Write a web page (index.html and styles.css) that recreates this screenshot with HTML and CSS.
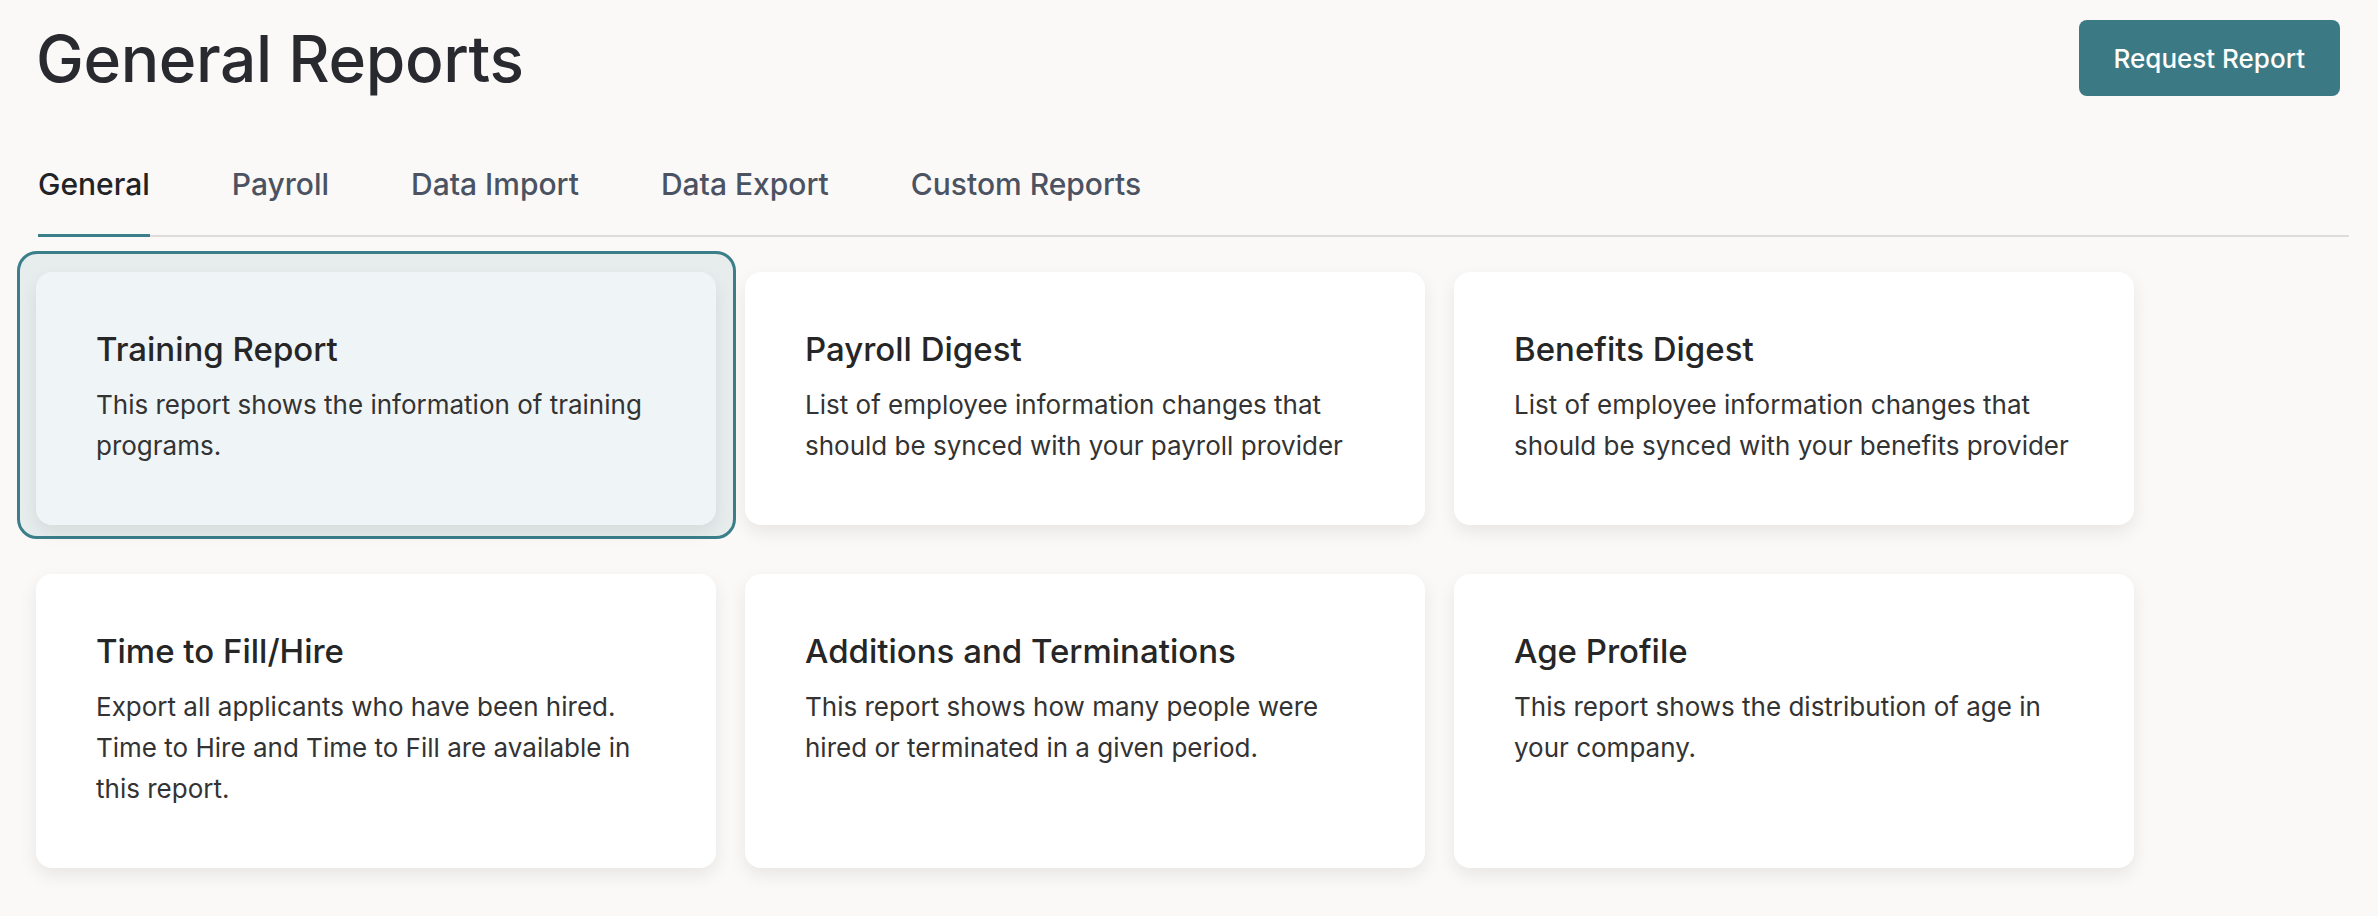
FILE: index.html
```html
<!DOCTYPE html>
<html lang="en">
<head>
    <meta charset="UTF-8">
    <meta name="viewport" content="width=device-width, initial-scale=1.0">
    <title>General Reports</title>
    <link rel="stylesheet" href="styles.css">
</head>
<body>
    <div class="page">
        <div class="page-header">
            <h1>General Reports</h1>
            <button class="btn-primary">Request Report</button>
        </div>

        <nav class="tabs">
            <a class="tab active">General</a>
            <a class="tab">Payroll</a>
            <a class="tab">Data Import</a>
            <a class="tab">Data Export</a>
            <a class="tab">Custom Reports</a>
        </nav>

        <div class="report-grid">
            <div class="report-card selected">
                <h2>Training Report</h2>
                <p>This report shows the information of training programs.</p>
            </div>
            <div class="report-card">
                <h2>Payroll Digest</h2>
                <p>List of employee information changes that should be synced with your payroll provider</p>
            </div>
            <div class="report-card">
                <h2>Benefits Digest</h2>
                <p>List of employee information changes that should be synced with your benefits provider</p>
            </div>
            <div class="report-card">
                <h2>Time to Fill/Hire</h2>
                <p>Export all applicants who have been hired. Time to Hire and Time to Fill are available in this report.</p>
            </div>
            <div class="report-card">
                <h2>Additions and Terminations</h2>
                <p>This report shows how many people were hired or terminated in a given period.</p>
            </div>
            <div class="report-card">
                <h2>Age Profile</h2>
                <p>This report shows the distribution of age in your company.</p>
            </div>
        </div>
    </div>
</body>
</html>
```

FILE: styles.css
```css
body {
    margin: 0;
    background-color: #faf9f7;
    font-family: Inter, "Noto Sans", sans-serif;
    color: #262626;
}

.page {
    padding: 20px 29px 40px 36px;
}

.page-header {
    display: flex;
    justify-content: space-between;
    align-items: flex-start;
}

h1 {
    margin: 0;
    font-size: 64px;
    font-weight: 500;
    line-height: 77px;
    color: #292a2f;
    letter-spacing: -0.4px;
}

.btn-primary {
    height: 76px;
    padding: 0 35px;
    margin-right: 9px;
    background-color: #3b7a84;
    color: white;
    border: none;
    border-radius: 8px;
    font-family: Inter, sans-serif;
    font-size: 26px;
    font-weight: 500;
    cursor: pointer;
}

.tabs {
    display: flex;
    gap: 82px;
    margin: 61px 0 0 2px;
    border-bottom: 2px solid #dedddb;
}

.tab {
    padding: 8px 0 32px;
    margin-bottom: -2px;
    border-bottom: 3px solid transparent;
    font-size: 30px;
    font-weight: 500;
    line-height: 36px;
    color: #4b5262;
    cursor: pointer;
}

.tab.active {
    color: #222326;
    border-bottom-color: #3b7f8a;
}

.report-grid {
    display: grid;
    grid-template-columns: repeat(3, 680px);
    column-gap: 29px;
    row-gap: 49px;
    margin-top: 35px;
}

.report-card {
    position: relative;
    background-color: white;
    border-radius: 16px;
    padding: 57px 56px 59px 60px;
    box-shadow: 0 7px 18px rgba(0, 0, 0, 0.08);
}

.report-card.selected {
    background-color: #eff4f6;
}

/* focus ring around the selected card */
.report-card.selected::before {
    content: "";
    position: absolute;
    top: -21px;
    bottom: -14px;
    left: -19px;
    right: -20px;
    border: 3px solid #3b7f8a;
    border-radius: 20px;
    background-color: #e7eced;
    z-index: -1;
}

.report-card h2 {
    margin: 0 0 15px;
    font-size: 33px;
    font-weight: 500;
    line-height: 40px;
    color: #262626;
}

.report-card p {
    margin: 0;
    font-size: 26px;
    line-height: 41px;
    color: #333;
}
```
